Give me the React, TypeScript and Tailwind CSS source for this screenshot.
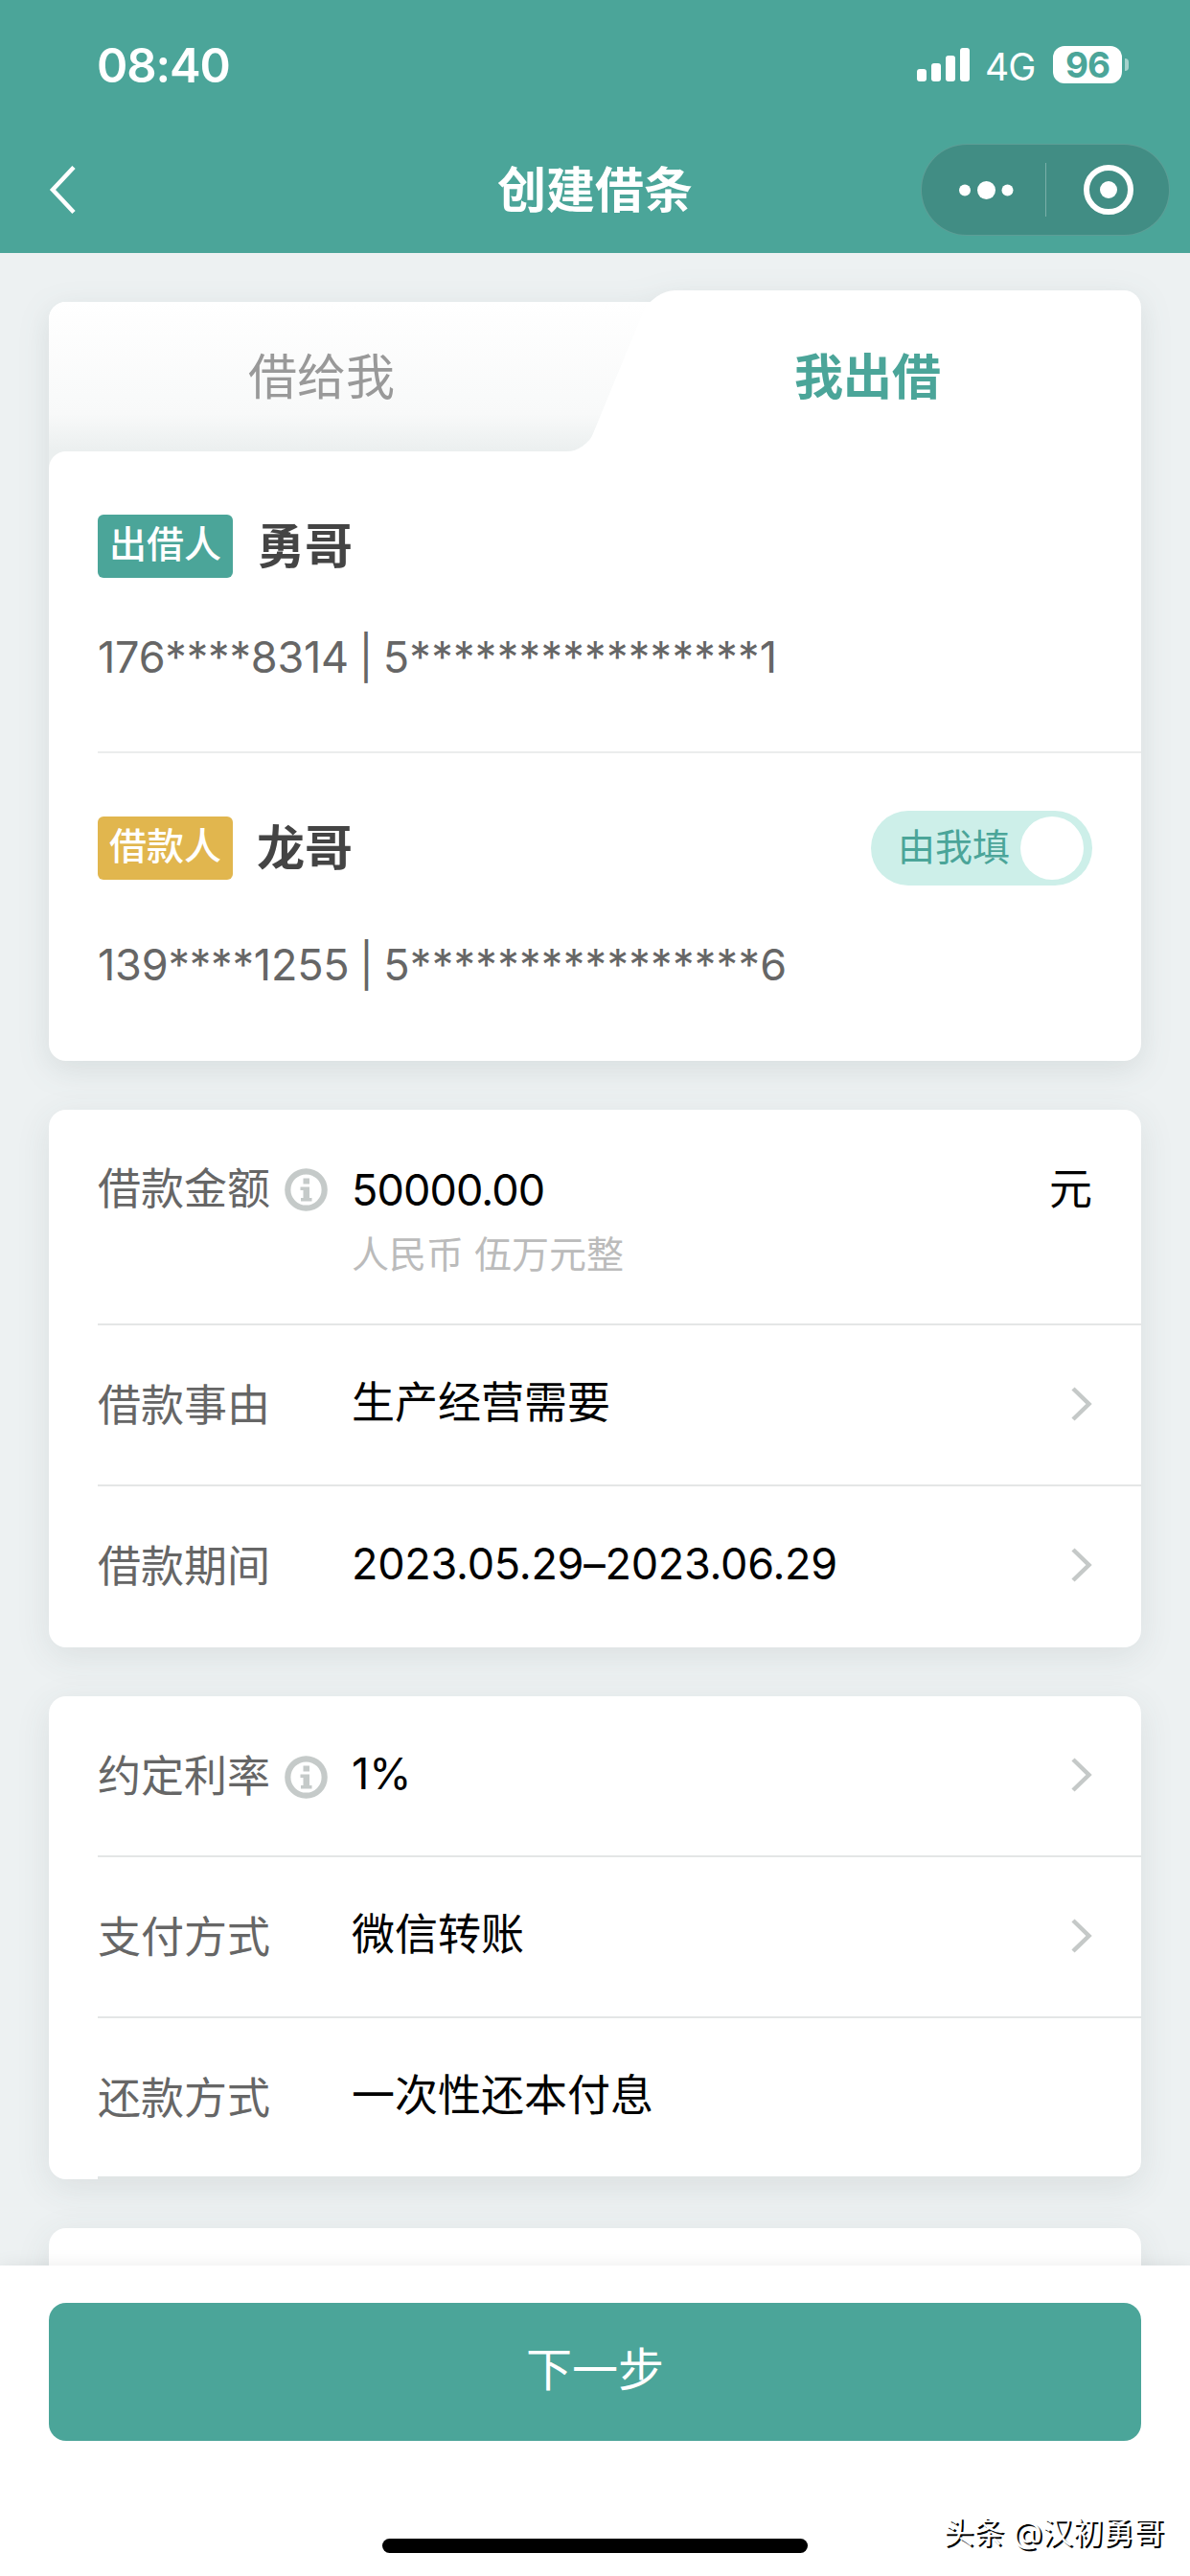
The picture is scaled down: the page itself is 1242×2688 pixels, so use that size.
import type { ReactNode } from 'react'

type Field = {
  label: string
  value: string
  info?: boolean
  arrow?: boolean
  underline?: boolean
  valueClass?: string
}

const RATE_FIELDS: Field[] = [
  { label: '约定利率', value: '1%', info: true, arrow: true },
  { label: '支付方式', value: '微信转账', arrow: true },
  { label: '还款方式', value: '一次性还本付息', underline: true },
]

const TERM_FIELDS: Field[] = [
  { label: '借款事由', value: '生产经营需要', arrow: true },
  { label: '借款期间', value: '2023.05.29–2023.06.29', arrow: true, valueClass: 'tracking-[-0.25px]' },
]

function StatusBar() {
  return (
    <div className="flex h-[132px] items-start justify-between pt-[42px] pr-[64px] pl-[101px]">
      <span className="mt-[2px] text-[49px] leading-[50px] font-semibold tracking-[-1.1px]">08:40</span>
      <div className="mt-[6px] flex h-[39px] items-center">
        <svg width="56" height="36" viewBox="0 0 56 36" fill="currentColor">
          <rect x="0" y="22" width="10" height="13" rx="3" />
          <rect x="15" y="16" width="10" height="19" rx="3" />
          <rect x="30" y="8" width="10" height="27" rx="3" />
          <rect x="45" y="0" width="10" height="35" rx="3" />
        </svg>
        <span className="ml-[15px] w-[56px] pt-[3px] text-[39px] leading-[39px] tracking-[-1px]">4G</span>
        <span className="ml-[15px] flex h-[39px] w-[72px] items-center justify-center rounded-[12px] bg-white text-[37px] leading-[39px] font-bold tracking-[-1px] text-[#4ba599]">
          96
        </span>
        <span className="ml-[3px] h-[13px] w-[4px] rounded-r-full bg-white/50" />
      </div>
    </div>
  )
}

function NavBar() {
  return (
    <div className="grid h-[132px] grid-cols-[1fr_auto_1fr] items-center px-[21px]">
      <svg className="ml-[29px]" width="30" height="54" viewBox="0 0 30 54" fill="none" stroke="currentColor" strokeWidth="4.5">
        <path d="M27 3.5 5 27l22 23.5" />
      </svg>
      <h1 className="text-center text-[51px] leading-none font-bold">创建借条</h1>
      <div className="flex h-[96px] w-[260px] items-center justify-self-end rounded-full border border-white/15 bg-[#418d84]">
        <svg width="258" height="94" viewBox="0 0 258 94" fill="currentColor">
          <circle cx="45" cy="47.5" r="6" />
          <circle cx="67.5" cy="47.5" r="9.5" />
          <circle cx="89.5" cy="47.5" r="6" />
          <rect x="129" y="19" width="1" height="56" opacity=".3" />
          <circle cx="195" cy="47" r="23" fill="none" stroke="currentColor" strokeWidth="6" />
          <circle cx="195" cy="47" r="9" />
        </svg>
      </div>
    </div>
  )
}

function InfoIcon() {
  return (
    <svg className="ml-[15px] shrink-0" width="45" height="45" viewBox="0 0 45 45">
      <circle cx="22.5" cy="22.5" r="19.2" fill="none" stroke="#c5cac9" strokeWidth="6.2" />
      <path d="M19.5 10.5h6.500v6h-6.500zM16.500 19.500h9.500v11.500h2.500v3.500H17v-3.500h2.500V23h-3z" fill="#c5cac9" />
    </svg>
  )
}

function Arrow() {
  return (
    <svg className="mb-[3px]" width="22" height="36" viewBox="0 0 22 36" fill="none" stroke="#c5c9c8" strokeWidth="4.5">
      <path d="M2 2l16.500 16L2 34" />
    </svg>
  )
}

function Card({ children }: { children?: ReactNode }) {
  return <section className="rounded-[18px] bg-white pl-[51px] shadow-[0_9px_36px_rgba(60,80,80,0.1)]">{children}</section>
}

function FieldRow({ label, value, info, arrow, underline, valueClass = '' }: Field) {
  return (
    <div
      className={`flex h-[168px] items-center border-b-[2px] border-[#e4e6e6] pr-[51px] ${
        underline ? 'last:border-b-[3px] last:border-[#e0e5e5] last:rounded-br-[18px]' : 'last:border-transparent'
      }`}
    >
      <div className="flex w-[265px] items-center pt-[2px] text-[#666]">
        {label}
        {info && <InfoIcon />}
      </div>
      <span className={`flex-1 pb-[4px] text-black ${valueClass}`}>{value}</span>
      {arrow && <Arrow />}
    </div>
  )
}

type PersonProps = {
  tag: string
  tagClass: string
  name: string
  phone: string
  idNumber: string
  detailClass: string
  children?: ReactNode
}

function Person({ tag, tagClass, name, phone, idNumber, detailClass, children }: PersonProps) {
  return (
    <div>
      <div className="flex h-[78px] items-center pr-[51px]">
        <span className={`flex h-[66px] w-[141px] items-center justify-center rounded-[6px] pb-[3px] text-[39px] font-medium text-white ${tagClass}`}>
          {tag}
        </span>
        <span className="ml-[25px] flex-1 text-[50px] leading-none font-bold text-[#444]">{name}</span>
        {children}
      </div>
      <p className={`text-[45px] leading-[66px] whitespace-nowrap text-[#666] [word-spacing:-2px] ${detailClass}`}>
        <span className="tracking-[-0.2px]">{phone} | </span>
        <span className="tracking-[0.3px]">{idNumber}</span>
      </p>
    </div>
  )
}

// Left tab sits 12px lower; the slanted edge is a skewed pseudo element on each tab
function Tabs() {
  return (
    <div className="flex h-[168px] items-end text-[51px] leading-none">
      <div className="relative flex h-[156px] w-[632px] items-center overflow-hidden rounded-tl-[18px] bg-white before:absolute before:inset-y-0 before:-left-[100px] before:w-[693px] before:-skew-x-[22.4deg] before:rounded-br-[20px] before:bg-linear-to-b before:from-white before:via-[#f8f9f9] before:via-75% before:to-[#ebefef]">
        <span className="relative w-[569px] text-center text-[#999]">借给我</span>
      </div>
      <div className="relative flex h-[168px] flex-1 items-center justify-center before:absolute before:inset-y-0 before:-left-[37px] before:w-[300px] before:-skew-x-[22.4deg] before:rounded-tl-[24px] before:bg-white after:absolute after:inset-y-0 after:right-0 after:left-[100px] after:rounded-tr-[18px] after:bg-white">
        <span className="relative z-10 pt-[12px] pr-[63px] font-bold text-[#4ba599]">我出借</span>
      </div>
    </div>
  )
}

export default function App() {
  return (
    <div className="flex h-[2688px] w-[1242px] flex-col overflow-hidden bg-[#edf1f2] font-[Inter,'Noto_Sans_CJK_SC',sans-serif] text-[45px]">
      <header className="shrink-0 bg-[#4ba599] text-white">
        <StatusBar />
        <NavBar />
      </header>

      <main className="flex min-h-0 flex-1 flex-col gap-[51px] overflow-hidden px-[51px] pt-[39px]">
        <section className="drop-shadow-[0_9px_16px_rgba(60,80,80,0.12)]">
          <Tabs />
          <div className="bg-[#ebefef]">
            <div className="rounded-tl-[18px] bg-white pl-[51px]">
              <div className="h-[315px] border-b-[2px] border-[#ebeded] pt-[60px]">
                <Person
                  tag="出借人"
                  tagClass="bg-[#4ba599]"
                  name="勇哥"
                  phone="176****8314"
                  idNumber="5****************1"
                  detailClass="mt-[44px]"
                />
              </div>
            </div>
          </div>
          <div className="h-[321px] rounded-b-[18px] bg-white pt-[60px] pl-[51px]">
            <Person
              tag="借款人"
              tagClass="bg-[#e1b64e]"
              name="龙哥"
              phone="139****1255"
              idNumber="5****************6"
              detailClass="mt-[50px]"
            >
              <div className="flex h-[78px] w-[231px] items-center justify-between rounded-full bg-[#cdefe9] pr-[9px] pl-[28px]">
                <span className="pb-[3px] text-[39px] leading-none text-[#4ba599]">由我填</span>
                <span className="h-[66px] w-[66px] rounded-full bg-white" />
              </div>
            </Person>
          </div>
        </section>

        <Card>
          <div className="flex h-[225px] items-start border-b-[2px] border-[#e4e6e6] pt-[49px] pr-[51px] leading-[68px]">
            <div className="flex w-[265px] items-center text-[#666]">
              借款金额
              <InfoIcon />
            </div>
            <div className="flex-1">
              <div className="pt-px tracking-[-0.9px] text-black">50000.00</div>
              <div className="-mt-px text-[39px] text-[#bbb]">人民币 伍万元整</div>
            </div>
            <span className="text-black">元</span>
          </div>
          {TERM_FIELDS.map((field) => (
            <FieldRow key={field.label} {...field} />
          ))}
        </Card>

        <Card>
          {RATE_FIELDS.map((field) => (
            <FieldRow key={field.label} {...field} />
          ))}
        </Card>

        <section className="h-[200px] shrink-0 rounded-[18px] bg-white shadow-[0_9px_36px_rgba(60,80,80,0.1)]" />
      </main>

      <footer className="relative flex h-[324px] shrink-0 flex-col items-center bg-white px-[51px] pt-[39px] shadow-[0_0_18px_rgba(0,0,0,0.08)]">
        <button className="h-[144px] w-full rounded-[18px] bg-[#4ba599] pb-[4px] text-[48px] text-white">下一步</button>
        <div className="mt-[102px] h-[15px] w-[444px] rounded-full bg-black" />
        <span className="absolute right-[27px] bottom-[25px] text-[31.8px] leading-[40px] whitespace-nowrap text-white [text-shadow:2px_2px_0_#000]">
          头条 @汉初勇哥
        </span>
      </footer>
    </div>
  )
}
